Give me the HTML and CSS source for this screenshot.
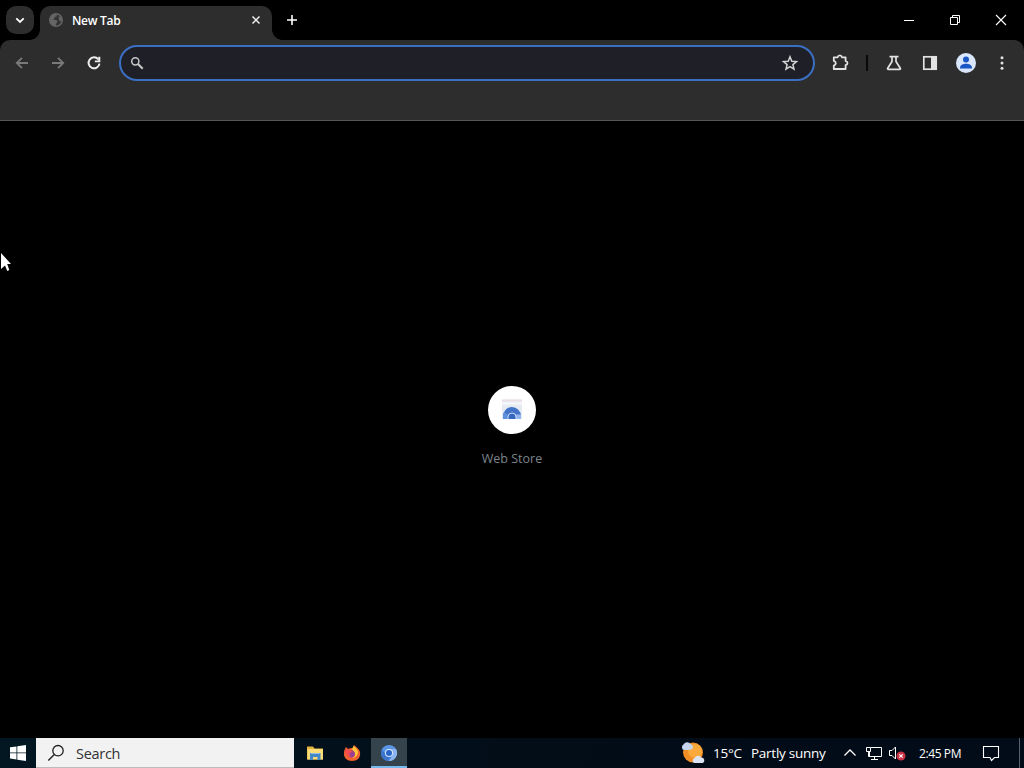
FILE: index.html
```html
<!DOCTYPE html>
<html lang="en">
<head>
<meta charset="UTF-8">
<meta name="viewport" content="width=device-width, initial-scale=1.0">
<title>New Tab</title>
<link rel="stylesheet" href="styles.css">
</head>
<body>
<div class="desktop">
    <header class="tabstrip">
        <button class="tab-search" aria-label="Search tabs">
            <svg width="28" height="28" viewBox="0 0 28 28"><path d="M10.300 12.300l3.700 3.700 3.700-3.700" fill="none" stroke="#fff" stroke-width="1.800"/></svg>
        </button>
        <div class="tab">
            <svg class="tab-icon" width="16" height="16" viewBox="0 0 16 16">
                <circle cx="8" cy="8" r="6.300" fill="#343434" stroke="#656565" stroke-width="1.400"/>
                <path d="M2 8c0-3 2-5.500 5-6l2 .5-.5 2L6.500 5v1.500L5 8h3.500l1 1.500-1 1.500-1 3C4 13.500 2 11 2 8zM10.500 5.500l1.500-1.500 2 3-.5 2.500-2-.5z" fill="#656565"/>
            </svg>
            <span class="tab-title">New Tab</span>
            <svg class="tab-close" width="16" height="16" viewBox="0 0 16 16"><path d="M4.500 4.500l7 7m0-7l-7 7" stroke="#eee" stroke-width="1.500"/></svg>
        </div>
        <button class="new-tab" aria-label="New tab">
            <svg width="28" height="28" viewBox="0 0 28 28"><path d="M9 14h10M14 9v10" stroke="#fff" stroke-width="1.600"/></svg>
        </button>
        <div class="window-controls">
            <button aria-label="Minimize"><svg width="46" height="40" viewBox="0 0 46 40"><path d="M18 20.500h10" stroke="#fff"/></svg></button>
            <button aria-label="Restore"><svg width="46" height="40" viewBox="0 0 46 40"><path d="M18.500 17.500h7v7h-7zM20.500 17.500v-2h7v7h-2" fill="none" stroke="#fff"/></svg></button>
            <button aria-label="Close"><svg width="46" height="40" viewBox="0 0 46 40"><path d="M18 15l10 10m0-10L18 25" stroke="#fff" stroke-width="1.100"/></svg></button>
        </div>
    </header>

    <nav class="toolbar">
        <button class="tool"><svg width="20" height="20" viewBox="0 0 20 20"><path d="M16 10H5M10 4.800L4.800 10l5.200 5.200" fill="none" stroke="#7a7a7a" stroke-width="1.800"/></svg></button>
        <button class="tool"><svg width="20" height="20" viewBox="0 0 20 20"><path d="M4 10h11M10 4.800l5.200 5.200-5.200 5.200" fill="none" stroke="#7a7a7a" stroke-width="1.800"/></svg></button>
        <button class="tool"><svg width="20" height="20" viewBox="0 0 20 20"><path d="M14.300 6.300A5.500 5.500 0 1 0 15.500 10.700" fill="none" stroke="#eee" stroke-width="2"/><path d="M16.300 3.800V9.200h-5.500V7.400h3.500V3.800z" fill="#eee"/></svg></button>
        <div class="omnibox">
            <svg width="16" height="16" viewBox="0 0 16 16"><circle cx="6.300" cy="6.300" r="3.600" fill="none" stroke="#c8c8c8" stroke-width="1.500"/><path d="M9 9l4.700 4.700" stroke="#c8c8c8" stroke-width="2"/></svg>
            <span class="omnibox-input"></span>
            <svg width="20" height="20" viewBox="0 0 20 20"><path d="M10 3.800l1.800 4.400 4.700.4-3.600 3 1.100 4.600-4-2.500-4 2.500 1.100-4.600-3.600-3 4.700-.4z" fill="none" stroke="#d4d4d4" stroke-width="1.500"/></svg>
        </div>
        <div class="tools">
            <button class="tool"><svg width="20" height="20" viewBox="0 0 20 20"><path d="M3.800 4.400h3.700q.6-2 2.300-2t2.300 2h3.500v3.700q1.900.3 1.900 2t-1.900 2v3.900H3.800v-3.500q2-.6 2-2.300t-2-2.300z" fill="none" stroke="#e2e2e2" stroke-width="1.800" stroke-linejoin="round"/></svg></button>
            <span class="divider"></span>
            <button class="tool"><svg width="20" height="20" viewBox="0 0 20 20"><path d="M5.500 3.700h9M8 3.500v5L3.700 15.200c-.4.700 0 1.200.7 1.200h11.200c.7 0 1.100-.5.700-1.200L12 8.500v-5" fill="none" stroke="#e2e2e2" stroke-width="1.700"/></svg></button>
            <button class="tool"><svg width="20" height="20" viewBox="0 0 20 20"><rect x="3.800" y="3.800" width="12.400" height="12.400" fill="none" stroke="#e2e2e2" stroke-width="1.700"/><path d="M11 4h5v12h-5z" fill="#e2e2e2"/></svg></button>
            <button class="tool"><svg width="20" height="20" viewBox="0 0 20 20"><circle cx="10" cy="10" r="10" fill="#d9e6fb"/><circle cx="10" cy="6.500" r="3" fill="#1b57c4"/><path d="M4 15c0-3 3-4.200 6-4.200s6 1.200 6 4.200v.500H4z" fill="#1b57c4"/></svg></button>
            <button class="tool"><svg width="20" height="20" viewBox="0 0 20 20" fill="#e2e2e2"><circle cx="10" cy="4.800" r="1.500"/><circle cx="10" cy="10" r="1.500"/><circle cx="10" cy="15.200" r="1.500"/></svg></button>
        </div>
    </nav>

    <main class="page">
        <a class="shortcut">
            <span class="shortcut-icon">
                <svg width="24" height="24" viewBox="0 0 24 24">
                    <path d="M2 2.500h20V22H2z" fill="#e6ebf3"/>
                    <path d="M2 2.500h20v1.500H2z" fill="#eedfe2"/>
                    <path d="M2 6.500h20" stroke="#f8f8fa" stroke-width="2"/>
                    <path d="M3 22v-3a9 9 0 0 1 18 0v3z" fill="#4474c8"/>
                    <path d="M3 22v-3l1.500-4L9 19v3z" fill="#5f90de"/>
                    <path d="M14 17.500h7V22h-6z" fill="#93b6ee"/>
                    <path d="M8 22v-2a4 4 0 0 1 8 0v2" fill="#3568bd" stroke="#c9daf5" stroke-width="1"/>
                </svg>
            </span>
            <span class="shortcut-title">Web Store</span>
        </a>
    </main>

    <footer class="taskbar">
        <button class="start" aria-label="Start">
            <svg width="16" height="16" viewBox="0 0 16 16" fill="#fff"><path d="M0 2.300l6.500-.9v6.100H0zM7.300 1.300L16 0v7.500H7.300zM0 8.300h6.500v6.200L0 13.600zM7.300 8.300H16V16l-8.700-1.300z"/></svg>
        </button>
        <div class="search">
            <svg width="18" height="18" viewBox="0 0 18 18"><circle cx="11" cy="6.700" r="5.200" fill="none" stroke="#222" stroke-width="1.300"/><path d="M7.300 10.500L1.300 16.500" stroke="#222" stroke-width="1.400"/></svg>
            <span>Search</span>
        </div>
        <div class="apps">
            <span class="app">
                <svg width="18" height="18" viewBox="0 0 18 18"><path d="M1 2.500h6l1.500 2H17v11H1z" fill="#e6b43c"/><path d="M1.500 5h15.500v10.500H1.500z" fill="#fbdc79"/><path d="M4 16V9h10.500v7h-3v-3h-4.500v3z" fill="#4588c7"/><path d="M5 9.500h8.500" stroke="#8cc1e8"/></svg>
            </span>
            <span class="app">
                <svg width="18" height="18" viewBox="0 0 18 18"><path d="M2 5l1-2 2 2c2-1 3-1 5-1l2-3c0 2 4 3 5 7 1 6-3 9-8 9s-8-3-8-7c0-2 0-3 1-5z" fill="#f2612f"/><path d="M11 1c0 3 4 3 4 8-1 4-4 5-6 5 3-2 3-6 0-9z" fill="#ffc438"/><circle cx="8.500" cy="10" r="3.500" fill="#9c3f90"/><path d="M2 6c3-2 6 0 7 2-3 0-3 3-1 4-4 1-6-2-6-6z" fill="#f44c4e"/></svg>
            </span>
            <span class="app active">
                <svg width="18" height="18" viewBox="0 0 18 18"><circle cx="9" cy="9" r="8" fill="#5b96e5"/><path d="M2 5a8 8 0 0 0 6 12l4-6H6z" fill="#3b74cb"/><path d="M9 5h7a8 8 0 0 1-7 12l4-6z" fill="#8db6f0"/><circle cx="9" cy="9" r="4" fill="#d9e8fb"/><circle cx="9" cy="9" r="3" fill="#2765c9"/></svg>
            </span>
        </div>
        <div class="weather">
            <svg width="26" height="24" viewBox="0 0 26 24"><circle cx="13" cy="11.500" r="10" fill="#f08f26"/><circle cx="15" cy="10" r="7" fill="#fba93a"/><path d="M4 9a3 3 0 0 1-.5-5.500A4 4 0 0 1 10.500 3a3 3 0 0 1 1 5.500L7 9z" fill="#c6d6ef"/><path d="M14 22a2.800 2.800 0 0 1 .5-5 4 4 0 0 1 7-.5 3 3 0 0 1 1.500 5.500z" fill="#dce4f4"/></svg>
            <span class="temp">15°C</span>
            <span class="sky">Partly sunny</span>
        </div>
        <div class="tray">
            <svg width="14" height="18" viewBox="0 0 14 18"><path d="M1.500 11.500L7 6l5.500 5.500" fill="none" stroke="#fff" stroke-width="1.300"/></svg>
            <svg width="18" height="18" viewBox="0 0 18 18" fill="none" stroke="#fff"><path d="M6 3.500h10.500v9H4.500V7.500M9.500 12.500v3M6 15.500h7M1.500 3.500h4v4h-4zM3.500 7.500v5h2"/></svg>
            <svg width="18" height="18" viewBox="0 0 18 18"><path d="M1.500 6.500H4l3.500-3.500v12L4 11.500H1.500z" fill="none" stroke="#fff"/><circle cx="13" cy="12" r="4.500" fill="#cc3445"/><path d="M11.300 10.300l3.400 3.400m0-3.400l-3.400 3.400" stroke="#fff" stroke-width="1.100"/></svg>
        </div>
        <span class="clock">2:45 PM</span>
        <svg class="notify" width="18" height="18" viewBox="0 0 18 18"><path d="M1.500 2.500h15v11h-4L9.500 16.500 8 13.500H1.500z" fill="none" stroke="#fff" stroke-width="1.100"/></svg>
        <span class="show-desktop"></span>
    </footer>

    <svg class="cursor" width="12" height="20" viewBox="0 0 12 20"><path d="M1 0l10 11H7.200L9.300 17 7.300 18 5 12.500 1 16z" fill="#fff"/></svg>
</div>
</body>
</html>
```
FILE: styles.css
```css
* {
    box-sizing: border-box;
}
body {
    margin: 0;
    background: #000;
    font-family: "Open Sans", "Noto Sans", sans-serif;
}
button {
    padding: 0;
    border: none;
    background: none;
}
svg {
    display: block;
    flex: none;
}
.desktop {
    position: relative;
    display: flex;
    flex-direction: column;
    width: 1024px;
    height: 768px;
    overflow: hidden;
    background: #000;
}

/* tab strip */
.tabstrip {
    display: flex;
    height: 40px;
    padding-left: 6px;
}
.tab-search {
    width: 28px;
    height: 28px;
    margin: 6px 6px 0 0;
    border-radius: 10px;
    background: #2d2d2d;
}
.tab {
    position: relative;
    display: flex;
    align-items: center;
    width: 232px;
    height: 34px;
    margin-top: 6px;
    padding: 0 8px 6px;
    border-radius: 10px 10px 0 0;
    background: #2d2d2d;
}
/* curved feet of the tab */
.tab::before,
.tab::after {
    content: "";
    position: absolute;
    bottom: 0;
    width: 10px;
    height: 10px;
}
.tab::before {
    left: -10px;
    background: radial-gradient(circle at 0 0, transparent 9.5px, #2d2d2d 10px);
}
.tab::after {
    right: -10px;
    background: radial-gradient(circle at 100% 0, transparent 9.5px, #2d2d2d 10px);
}
.tab-title {
    flex: 1;
    margin-left: 8px;
    padding-top: 1px;
    color: #fff;
    font-size: 12px;
    font-weight: 600;
    letter-spacing: -0.3px;
}
.new-tab {
    height: 28px;
    margin: 6px 0 0 6px;
}
.window-controls {
    display: flex;
    margin-left: auto;
}

/* toolbar */
.toolbar {
    display: flex;
    align-items: flex-start;
    height: 81px;
    padding: 5px 4px 0;
    border-bottom: 1px solid #555;
    border-radius: 10px 10px 0 0;
    background: #2d2d2d;
}
.tool {
    display: flex;
    align-items: center;
    justify-content: center;
    width: 36px;
    height: 36px;
}
.omnibox {
    display: flex;
    align-items: center;
    width: 696px;
    height: 36px;
    margin-left: 7px;
    padding: 0 13px 0 8px;
    border: 2px solid #3a6fc4;
    border-radius: 18px;
    background: #1f2027;
}
.omnibox-input {
    flex: 1;
}
.tools {
    display: flex;
    align-items: center;
    margin-left: auto;
}
.divider {
    width: 2px;
    height: 16px;
    margin: 0 8px;
    background: #090909;
}

/* new tab page */
.page {
    display: flex;
    flex: 1;
    justify-content: center;
    padding-top: 265px;
}
.shortcut {
    display: flex;
    flex-direction: column;
    align-items: center;
}
.shortcut-icon {
    display: flex;
    align-items: center;
    justify-content: center;
    width: 48px;
    height: 48px;
    border-radius: 50%;
    background: #fff;
}
.shortcut-icon svg {
    margin-top: -2px;
}
.shortcut-title {
    margin-top: 16px;
    color: #7b848b;
    font-size: 12.5px;
    line-height: 18px;
}

/* taskbar */
.taskbar {
    display: flex;
    align-items: center;
    height: 30px;
    background: linear-gradient(to right, #021722, #020d18 50%, #020b18);
    color: #fff;
}
.start {
    display: flex;
    align-items: center;
    justify-content: center;
    width: 36px;
    height: 30px;
}
.search {
    display: flex;
    align-items: center;
    width: 258px;
    height: 30px;
    padding-left: 11px;
    border-bottom: 1px solid #bbb;
    background: #f2f2f2;
    color: #333;
    font-size: 14.5px;
}
.search span {
    margin-left: 11px;
    padding-top: 2px;
    letter-spacing: -0.3px;
}
.apps {
    display: flex;
    gap: 1px;
    margin-left: 3px;
}
.app {
    display: flex;
    align-items: center;
    justify-content: center;
    width: 36px;
    height: 30px;
}
.app.active {
    padding-top: 2px;
    border-bottom: 2px solid #76b9ed;
    background: #34434c;
}
.weather {
    display: flex;
    align-items: center;
    width: 163px;
    margin-left: 273px;
    font-size: 13.5px;
    white-space: nowrap;
}
.temp {
    margin-left: 7px;
    letter-spacing: -0.2px;
}
.sky {
    margin-left: 9px;
    letter-spacing: -0.25px;
}
.tray {
    display: flex;
    gap: 8px;
}
.tray svg:last-child {
    margin-left: -3px;
}
.clock {
    width: 63px;
    margin-left: 13px;
    font-size: 12px;
    letter-spacing: -0.4px;
}
.notify {
    margin-top: -1px;
}
.show-desktop {
    width: 5px;
    height: 30px;
    margin-left: auto;
    border-left: 1px solid #59616a;
}

.cursor {
    position: absolute;
    left: 0;
    top: 253px;
}
```
